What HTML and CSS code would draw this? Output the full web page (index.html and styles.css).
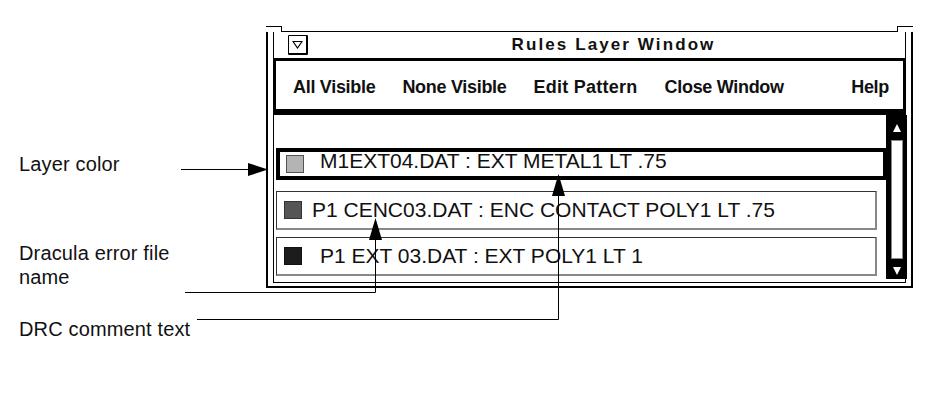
FILE: index.html
```html
<!DOCTYPE html>
<html>
<head>
<meta charset="utf-8">
<link rel="stylesheet" href="styles.css">
</head>
<body>
<div class="figure">
  <div class="labels">
    <div class="label label-layer">Layer color</div>
    <div class="label label-file">Dracula error file<br>name</div>
    <div class="label label-drc">DRC comment text</div>
  </div>
  <div class="window-col">
    <div class="window">
      <span class="corner tl"></span><span class="corner tr"></span>
      <div class="inner">
        <div class="titlebar">
          <div class="menu-btn"><svg width="11" height="9" viewBox="0 0 11 9"><path d="M1 1.5 H10 L5.5 8 Z" fill="none" stroke="#000" stroke-width="1.2"/></svg></div>
          <div class="title">Rules Layer Window</div>
        </div>
        <div class="menubar">
          <span class="mi">All Visible</span>
          <span class="mi">None Visible</span>
          <span class="mi mi-wide">Edit Pattern</span>
          <span class="mi">Close Window</span>
          <span class="mi help">Help</span>
        </div>
        <div class="list">
          <div class="rows">
            <div class="row row-sel"><span class="sw sw-light"></span><span class="rt">M1EXT04.DAT : EXT METAL1 LT .75</span></div>
            <div class="row row-2"><span class="sw sw-mid"></span><span class="rt">P1 CENC03.DAT : ENC CONTACT POLY1 LT .75</span></div>
            <div class="row row-3"><span class="sw sw-dark"></span><span class="rt">P1 EXT 03.DAT : EXT POLY1 LT 1</span></div>
          </div>
          <div class="scrollbar">
            <svg class="arr" width="8" height="8" viewBox="0 0 8 8"><path d="M4 0 L8 8 H0 Z" fill="#fff"/></svg>
            <div class="trough"></div>
            <svg class="arr" width="8" height="8" viewBox="0 0 8 8"><path d="M0 0 H8 L4 8 Z" fill="#fff"/></svg>
          </div>
        </div>
      </div>
    </div>
  </div>
  <svg class="callouts" width="950" height="399" viewBox="0 0 950 399">
    <g stroke="#000" stroke-width="1" fill="none">
      <path d="M181 169.5 H250"/>
      <path d="M185 292.5 H375.5 V236"/>
      <path d="M197 319.5 H558.5 V192"/>
    </g>
    <g fill="#000">
      <path d="M248 163 L268 169.5 L248 176 Z"/>
      <path d="M375.5 218 L382 240 L369 240 Z"/>
      <path d="M558.5 174 L565 196 L552 196 Z"/>
    </g>
  </svg>
</div>
</body>
</html>
```

FILE: styles.css
```css
html, body {
  margin: 0;
  padding: 0;
  background: #fff;
}
body {
  width: 950px;
  height: 399px;
  overflow: hidden;
  font-family: "Liberation Sans", Arial, sans-serif;
  color: #000;
}
.figure {
  position: relative;
  display: flex;
  width: 950px;
  height: 399px;
}
.labels {
  width: 266px;
  flex: none;
  padding: 152px 0 0 19px;
  box-sizing: border-box;
}
.label {
  font-size: 20px;
  line-height: 24px;
  letter-spacing: 0.15px;
  color: #111;
  white-space: nowrap;
}
.label-file { margin-top: 65px; }
.label-drc { margin-top: 28px; }

.window-col {
  padding-top: 26px;
}
.window {
  position: relative;
  width: 647px;
  height: 262px;
  box-sizing: border-box;
  border: 2px solid #000;
  border-top: none;
  padding: 5px 5px 3px 5px;
  background: #fff;
}
.corner {
  position: absolute;
  top: 0;
  width: 15px;
  height: 5px;
  border-top: 1.5px solid #000;
  background: #fff;
}
.corner.tl { left: -2px; border-right: 1.5px solid #000; }
.corner.tr { right: -2px; border-left: 1.5px solid #000; }
.inner {
  height: 100%;
  box-sizing: border-box;
  border-top: 1.5px solid #000;
  border-left: 1px solid #000;
  border-right: 1px solid #000;
  border-bottom: 1px solid #000;
  display: flex;
  flex-direction: column;
}
.titlebar {
  position: relative;
  height: 26px;
  display: flex;
  align-items: center;
  flex: none;
}
.menu-btn {
  margin-left: 14px;
  width: 17px;
  height: 17px;
  border: 1px solid #000;
  border-right-width: 2px;
  border-bottom-width: 2px;
  border-radius: 1px;
  display: flex;
  align-items: center;
  justify-content: center;
}
.title {
  flex: 1;
  text-align: center;
  font-weight: bold;
  font-size: 17px;
  letter-spacing: 2.1px;
  padding-left: 14px;
  color: #111;
}
.menubar {
  flex: none;
  height: 57px;
  box-sizing: border-box;
  border-top: 3px solid #000;
  border-left: 2px solid #000;
  border-right: 2px solid #000;
  border-bottom: 6px solid #000;
  display: flex;
  align-items: center;
  gap: 27px;
  padding: 5px 14px 0 17px;
  font-weight: bold;
  font-size: 18px;
  letter-spacing: -0.3px;
  color: #111;
}
.mi-wide { letter-spacing: 0.25px; }
.help { margin-left: auto; }
.list {
  flex: 1;
  display: flex;
  min-height: 0;
}
.rows {
  flex: 1;
  padding: 33px 0 0 2px;
}
.row {
  display: flex;
  align-items: center;
  box-sizing: border-box;
  font-size: 21px;
  color: #111;
  white-space: nowrap;
}
.row-sel {
  height: 32px;
  border: 4px solid #000;
  margin-right: -1px;
  padding-left: 6px;
}
.row-sel .rt { margin-bottom: 7px; }
.row-2, .row-3 {
  width: 601px;
  height: 39px;
  border-top: 1px solid #333;
  border-left: 1px solid #333;
  border-right: 2px solid #888;
  border-bottom: 2px solid #888;
  padding-left: 7px;
}
.row-2 { margin-top: 11px; }
.row-3 { margin-top: 7px; }
.sw {
  flex: none;
  width: 16px;
  height: 16px;
  border: 1px solid #444;
  margin-right: 10px;
}
.row-sel .sw { margin-right: 16px; }
.row-3 .sw { margin-right: 18px; }
.sw-light { background: #b4b4b4; border-color: #555; }
.sw-mid { background: #555; border-color: #333; }
.sw-dark { background: #1c1c1c; border-color: #111; }
.rt { display: block; }

.scrollbar {
  flex: none;
  width: 21px;
  margin-right: -2px;
  margin-bottom: 3px;
  background: #000;
  display: flex;
  flex-direction: column;
  align-items: center;
  padding: 9px 0 4px;
  box-sizing: border-box;
}
.arr { flex: none; }
.trough {
  flex: 1;
  width: 10px;
  margin: 8px 0;
  background: #fff;
  border: 1px solid #888;
}
.callouts {
  position: absolute;
  left: 0;
  top: 0;
  pointer-events: none;
}
```
